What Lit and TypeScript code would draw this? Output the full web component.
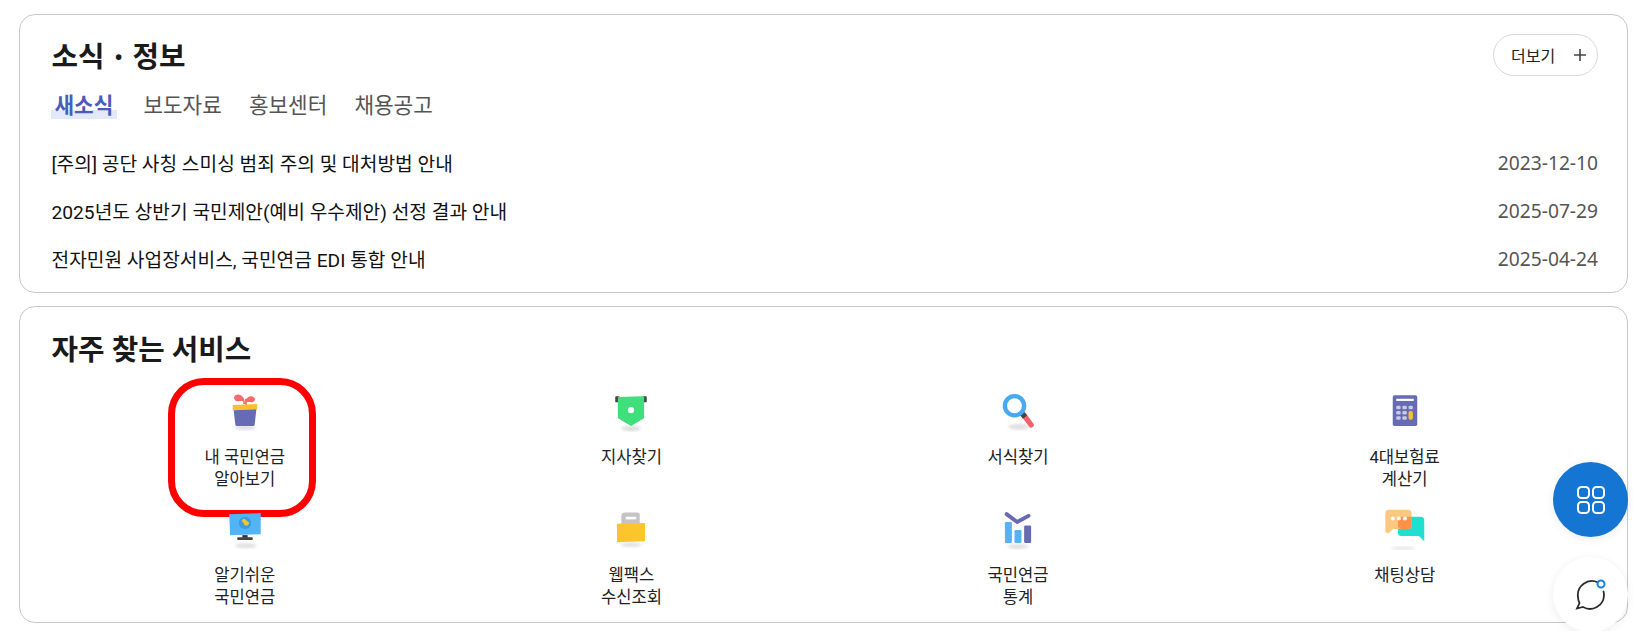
import { LitElement, html, css, svg } from "lit";
import { customElement } from "lit/decorators.js";

const icons = [
  svg`<ellipse cx="24" cy="43" rx="12" ry="3" fill="#999" opacity=".3" filter="url(#b)"/>
      <path d="M24 16C24 10 21 5 16 5c-4 0-6 4-3 7 2 2 6 0 9 1l0 3zM24 16c0-5 3-9 7-9 4 0 6 4 3 6-3 2-6 0-8 1z" fill="#f86a70"/>
      <rect x="24" y="10" width="2" height="7" fill="#f86a70"/>
      <path d="M10 17l28-1v6l-28 1z" fill="#fbc02d"/>
      <path d="M11 23l26-1-2 18a2 2 0 0 1-2 1H15a2 2 0 0 1-2-1z" fill="#666bb3"/>`,
  svg`<ellipse cx="24" cy="44" rx="11" ry="3" fill="#999" opacity=".35" filter="url(#b)"/>
      <rect x="6" y="7" width="5" height="7" rx="1" fill="#444"/><rect x="37" y="7" width="5" height="7" rx="1" fill="#444"/>
      <path d="M9 8l30-1v25l-3 2-12 7-12-7-3-2z" fill="#3fe07c"/><circle cx="24" cy="23" r="3.500" fill="#fff"/>`,
  svg`<ellipse cx="25" cy="42" rx="12" ry="3.500" fill="#999" opacity=".3" filter="url(#b)"/>
      <path d="M31 29l8 11" stroke="#f8606a" stroke-width="6" stroke-linecap="round"/>
      <path d="M28 26l4 5" stroke="#3f4652" stroke-width="6"/>
      <circle cx="20" cy="18" r="11" fill="none" stroke="#45aaf2" stroke-width="5"/>`,
  svg`<rect x="10" y="6" width="28" height="35" rx="2" fill="#666bb3"/>
      <rect x="14" y="10" width="20" height="2.500" fill="#fff"/>
      <g fill="#c9cbe0"><rect x="14" y="18" width="5" height="4" rx="1.500"/><rect x="21" y="18" width="5" height="4" rx="1.500"/><rect x="14" y="24" width="5" height="4" rx="1.500"/><rect x="21" y="24" width="5" height="4" rx="1.500"/><rect x="14" y="30" width="5" height="4" rx="1.500"/><rect x="21" y="30" width="5" height="4" rx="1.500"/><rect x="28" y="18" width="5" height="4" rx="1.500"/></g>
      <rect x="28" y="24" width="5" height="10" rx="2" fill="#fbc02d"/>`,
  svg`<ellipse cx="25" cy="43" rx="12" ry="3" fill="#999" opacity=".3" filter="url(#b)"/>
      <path d="M6 7l36-1v24l-35 1z" fill="#52b4f5"/>
      <circle cx="24" cy="17" r="7" fill="#3a9be0"/><path d="M20 14l3-2 6 5-2 3h-3z" fill="#fbc02d"/>
      <rect x="21" y="31" width="6" height="3" fill="#333"/><rect x="15" y="33.500" width="18" height="3" rx="1.500" fill="#444"/>`,
  svg`<ellipse cx="24" cy="42" rx="12" ry="2.500" fill="#999" opacity=".3" filter="url(#b)"/>
      <path d="M13 19v-10a4 4 0 0 1 4-4h14a3 3 0 0 1 3 3v11z" fill="#c4c4c6"/><rect x="18" y="10" width="12" height="3" fill="#fff"/>
      <path d="M8 18l32-1v21l-32 1z" fill="#fdc52c"/>`,
  svg`<ellipse cx="24" cy="44" rx="12" ry="3" fill="#999" opacity=".3" filter="url(#b)"/>
      <rect x="9" y="16" width="8" height="24" rx="1.500" fill="#52b4f5"/><rect x="20" y="25" width="8" height="15" rx="1.500" fill="#52b4f5"/><rect x="31" y="20" width="8" height="20" rx="1.500" fill="#666bb3"/>
      <path d="M11 7l12 9 13-7" fill="none" stroke="#666bb3" stroke-width="4.500" stroke-linecap="round" stroke-linejoin="round"/>`,
  svg`<ellipse cx="22" cy="46" rx="14" ry="2" fill="#999" opacity=".25" filter="url(#b)"/>
      <path d="M20 10h22a4 4 0 0 1 4 4v24l-6-6H20a4 4 0 0 1-4-4V14a4 4 0 0 1 4-4z" fill="#1edfd0"/>
      <path d="M5.500 2h22a4 4 0 0 1 4 4v14a4 4 0 0 1-4 4H10l-5 5a3.500 3.500 0 0 1-3.500-3.500V6a4 4 0 0 1 4-4z" fill="#ffc880"/>
      <path d="M20 10h11.500v10a4 4 0 0 1-4 4H20a4 4 0 0 1-4-4v-6a4 4 0 0 1 4-4z" fill="#ff9147"/>
      <g fill="#fff"><circle cx="10" cy="12" r="2.300"/><circle cx="17" cy="12" r="2.300"/><circle cx="24" cy="12" r="2.300"/></g>`,
];

const services: [string, string?][] = [
  ["내 국민연금", "알아보기"], ["지사찾기"], ["서식찾기"], ["4대보험료", "계산기"],
  ["알기쉬운", "국민연금"], ["웹팩스", "수신조회"], ["국민연금", "통계"], ["채팅상담"],
];

const news = [
  ["[주의] 공단 사칭 스미싱 범죄 주의 및 대처방법 안내", "2023-12-10"],
  ["2025년도 상반기 국민제안(예비 우수제안) 선정 결과 안내", "2025-07-29"],
  ["전자민원 사업장서비스, 국민연금 EDI 통합 안내", "2025-04-24"],
];

@customElement("app-root")
export class AppRoot extends LitElement {
  static styles = css`
    :host { display: block; position: relative; height: 631px; overflow: hidden; background: #fff;
      font-family: Roboto, "Noto Sans CJK KR", sans-serif; color: #111; }
    .page { display: flex; flex-direction: column; gap: 13px; padding: 14px 20px 0 19px; }
    .card { border: 1px solid #c8c8c8; border-radius: 16px; padding: 0 29px 0 31.5px; box-sizing: border-box; }
    .news { height: 279px; }
    .head { display: flex; justify-content: space-between; align-items: flex-start; padding-top: 19px; }
    h2 { margin: 0; font-size: 28.8px; line-height: 44px; font-weight: 700; color: #1a1a1a; }
    .head h2 { margin-top: 1px; }
    .dot { font-size: 24px; margin: 0 2.5px; vertical-align: 1px; }
    .more { display: flex; align-items: center; justify-content: space-between; box-sizing: border-box;
      width: 105px; height: 42px; padding: 0 9px 0 17px; border: 1px solid #d9d9d9; border-radius: 21px;
      font-size: 16px; color: #222; }
    .tabs { display: flex; gap: 27px; margin-top: 11px; font-size: 21.33px; line-height: 30px; color: #555; }
    .tab.on { font-weight: 700; color: #4a5bbd; padding: 0 4px; margin-left: -1px; margin-right: -1px;
      background: linear-gradient(transparent 63%, #e3e9f8 63%, #e3e9f8 93%, transparent 93%); }
    .list { margin-top: 18px; }
    .row { display: flex; justify-content: space-between; align-items: center; height: 48px; font-size: 19.2px; }
    .date { font-family: "Noto Sans", sans-serif; font-size: 19.2px; line-height: 24px; color: #555; }
    .svc { height: 317px; }
    .svc h2 { padding-top: 21px; }
    .grid { display: grid; grid-template-columns: repeat(4, 1fr); grid-auto-rows: 118px; margin-top: 18px; }
    .item { position: relative; display: flex; flex-direction: column; align-items: center; font-size: 16.6px; line-height: 22px; text-align: center; color: #222; }
    .item svg { width: 42px; height: 42px; margin-bottom: 15px; filter: blur(.35px); }
    .item.mark::after { content: ""; position: absolute; left: 50%; top: -12px; width: 148px; height: 139px; transform: translateX(calc(-50% - 3px));
      box-sizing: border-box; border: 7px solid #f00; border-radius: 36px; }
    .fab { position: absolute; left: 1553px; width: 75px; height: 75px; border-radius: 50%; display: flex; align-items: center; justify-content: center; box-shadow: 0 2px 10px rgba(0,0,0,.08); }
    .fab.blue { top: 462px; background: #1476d2; }
    .fab.white { top: 557px; background: #fff; }
  `;

  render() {
    return html`
      <div class="page">
        <section class="card news">
          <div class="head">
            <h2>소식 <span class="dot">•</span> 정보</h2>
            <div class="more"><span>더보기</span>
              <svg width="16" height="16" viewBox="0 0 16 16"><path d="M8 2v12M2 8h12" stroke="#444" stroke-width="1.600"/></svg>
            </div>
          </div>
          <div class="tabs">
            <span class="tab on">새소식</span><span>보도자료</span><span>홍보센터</span><span>채용공고</span>
          </div>
          <div class="list">
            ${news.map(([t, d]) => html`<div class="row"><span>${t}</span><span class="date">${d}</span></div>`)}
          </div>
        </section>
        <section class="card svc">
          <h2>자주 찾는 서비스</h2>
          <div class="grid">
            ${services.map(([a, b], i) => html`
              <div class="item ${i === 0 ? "mark" : ""}">
                <svg viewBox="0 0 48 48"><defs><filter id="b"><feGaussianBlur stdDeviation="2"/></filter></defs>${icons[i]}</svg>
                <span>${a}</span>${b ? html`<span>${b}</span>` : ""}
              </div>`)}
          </div>
        </section>
      </div>
      <div class="fab blue">
        <svg width="30" height="30" viewBox="0 0 30 30" fill="none" stroke="#fff" stroke-width="2">
          <rect x="2" y="2" width="11" height="11" rx="3.500"/><rect x="17" y="2" width="11" height="11" rx="3.500"/>
          <rect x="2" y="17" width="11" height="11" rx="3.500"/><rect x="17" y="17" width="11" height="11" rx="3.500"/>
        </svg>
      </div>
      <div class="fab white">
        <svg width="34" height="34" viewBox="0 0 34 34" fill="none">
          <path d="M24 4.500A14 14 0 0 0 4 19c0 2 .5 4 1.500 6L3 30.500l6-1.500a14 14 0 0 0 21-12c0-1.500-.2-2.500-.5-3.500" stroke="#2b2b2b" stroke-width="1.800" stroke-linecap="round"/>
          <circle cx="27" cy="6" r="3.500" fill="#fff" stroke="#1c80e0" stroke-width="2"/>
        </svg>
      </div>
    `;
  }
}
